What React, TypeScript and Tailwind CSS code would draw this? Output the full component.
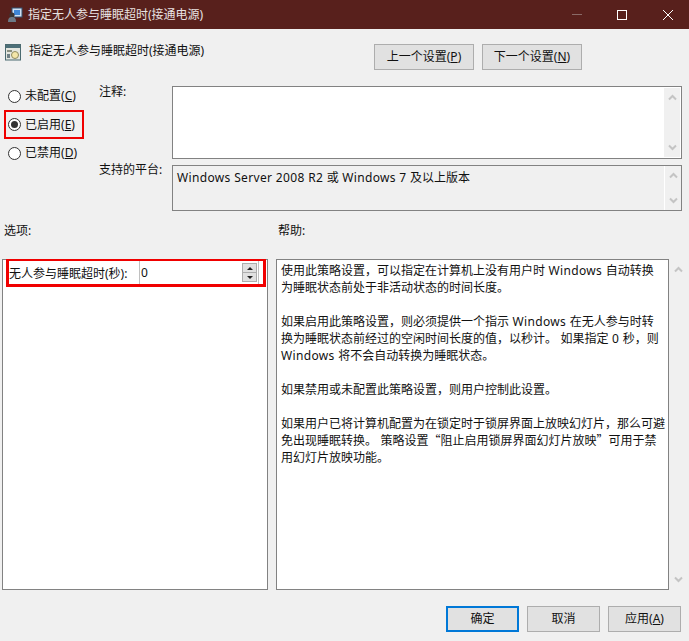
const font = { fontFamily: '"Noto Sans", "Noto Sans CJK SC", sans-serif' };
const cjk = { fontFamily: '"Noto Sans CJK SC", sans-serif' };

const helpParagraphs = [
  ["使用此策略设置，可以指定在计算机上没有用户时 Windows 自动转换", "为睡眠状态前处于非活动状态的时间长度。"],
  [
    "如果启用此策略设置，则必须提供一个指示 Windows 在无人参与时转",
    "换为睡眠状态前经过的空闲时间长度的值，以秒计。 如果指定 0 秒，则",
    "Windows 将不会自动转换为睡眠状态。",
  ],
  ["如果禁用或未配置此策略设置，则用户控制此设置。"],
  [
    "如果用户已将计算机配置为在锁定时于锁屏界面上放映幻灯片，那么可避",
    "免出现睡眠转换。 策略设置“阻止启用锁屏界面幻灯片放映”可用于禁",
    "用幻灯片放映功能。",
  ],
];

// latin runs sit a bit wider than the CJK ones, quotes come from the CJK font
const Mixed = ({ text }: { text: string }) => (
  <>
    {text.split(/([A-Za-z0-9 ]+|[“”])/).map((part, i) =>
      /^[A-Za-z0-9 ]+$/.test(part) ? (
        <span key={i} className="tracking-[0.35px]">
          {part}
        </span>
      ) : (
        <span key={i} style={cjk}>
          {part}
        </span>
      ),
    )}
  </>
);

const Chevron = ({ down }: { down?: boolean }) => (
  <svg width="9" height="7" viewBox="0 0 9 7" fill="none" stroke="#c4c4c4" strokeWidth="2">
    <path d={down ? "M1 1.5l3.5 3.5L8 1.5" : "M1 5.5L4.5 2 8 5.5"} />
  </svg>
);

const ScrollStrip = ({ className }: { className: string }) => (
  <div className={`flex flex-col items-center justify-between bg-[#f0f0f0] ${className}`}>
    <Chevron />
    <Chevron down />
  </div>
);

const Radio = ({ checked, label, hot }: { checked?: boolean; label: string; hot: string }) => (
  <div className="flex items-center gap-[4px]">
    <span className="flex h-[13px] w-[13px] items-center justify-center rounded-full border border-[#333] bg-white">
      {checked && <span className="h-[7px] w-[7px] rounded-full bg-[#333]" />}
    </span>
    <span className="text-[12px] leading-[16px]">
      {label}(<u>{hot}</u>)
    </span>
  </div>
);

const Btn = ({ children, primary }: { children: React.ReactNode; primary?: boolean }) => (
  <div
    className={`flex h-[26px] w-[73px] items-center justify-center bg-[#e1e1e1] text-[12px] ${
      primary ? "border-2 border-[#0078d7]" : "border border-[#adadad]"
    }`}
  >
    {children}
  </div>
);

export default function App() {
  return (
    <div style={font} className="flex h-[641px] w-[689px] flex-col overflow-hidden bg-[#f0f0f0] text-[12px] text-[#111]">
      {/* title bar */}
      <div className="flex h-[29px] shrink-0 items-center bg-[#58201c] pl-[7px] text-[#e8e2e1]">
        <svg width="16" height="16" viewBox="0 0 16 16">
          <rect x="5" y="1" width="10" height="9" fill="#cfe0f2" stroke="#33506e" />
          <rect x="7" y="3" width="6" height="5" fill="#3f86d6" />
          <circle cx="5" cy="8" r="2.6" fill="#3b3533" />
          <path d="M1 15c0-4 1.500-5 4-5s4 1 4 5z" fill="#6d7a86" />
        </svg>
        <span className="ml-[5px]">指定无人参与睡眠超时(接通电源)</span>
        <div className="ml-auto flex items-center">
          <span className="mr-[35px] h-px w-[10px] bg-[#8a6a67]" />
          <span className="mr-[36px] h-[10px] w-[10px] border border-white" />
          <svg width="10" height="10" viewBox="0 0 10 10" stroke="#fff" className="mr-[16px]">
            <path d="M0 0l10 10M10 0L0 10" />
          </svg>
        </div>
      </div>

      {/* heading row */}
      <div className="flex h-[57px] shrink-0 pt-[15px]">
        <svg width="16" height="17" viewBox="0 0 16 17" className="ml-[5px]">
          <rect x=".5" y=".5" width="15" height="15.500" fill="#e4e6df" stroke="#4b6a70" />
          <rect x="1" y="1" width="14" height="3" fill="#4d6f78" />
          <rect x="2" y="6" width="5" height="2" fill="#8a8f80" />
          <circle cx="10" cy="11" r="3.500" fill="#f3e5a8" stroke="#8f8a60" />
          <rect x="2" y="10" width="3" height="4" fill="#6f7f84" />
        </svg>
        <span className="ml-[8px] mt-[-1px] leading-[16px]">指定无人参与睡眠超时(接通电源)</span>
        <div className="ml-auto mr-[107px] flex gap-2">
          <div className="flex h-[26px] w-[100px] items-center justify-center border border-[#adadad] bg-[#e1e1e1]">
            上一个设置(<u>P</u>)
          </div>
          <div className="flex h-[26px] w-[100px] items-center justify-center border border-[#adadad] bg-[#e1e1e1]">
            下一个设置(<u>N</u>)
          </div>
        </div>
      </div>

      {/* state + comment */}
      <div className="flex h-[131px] shrink-0">
        <div className="flex w-[99px] shrink-0 flex-col pl-[8px] pt-[2px]">
          <Radio label="未配置" hot="C" />
          <div className="ml-[-4px] mt-[6px] flex h-[29px] w-[80px] items-center border-2 border-[#f00000] pl-[2px]">
            <Radio checked label="已启用" hot="E" />
          </div>
          <div className="mt-[6px]">
            <Radio label="已禁用" hot="D" />
          </div>
        </div>
        <div className="flex w-[73px] shrink-0 flex-col leading-[16px]">
          <span className="mt-[-2px]">注释:</span>
          <span className="mt-[62px]">支持的平台:</span>
        </div>
        <div className="flex w-[510px] flex-col gap-[6px]">
          <div className="flex h-[73px] justify-end border border-[#828282] bg-white p-px">
            <ScrollStrip className="w-[16px] py-[6px]" />
          </div>
          <div className="flex h-[46px] justify-between border border-[#828282] bg-[#f0f0f0] pl-[4px] leading-[16px]">
            <span className="pt-[3px] text-[12px]">
              <Mixed text="Windows Server 2008 R2 或 Windows 7 及以上版本" />
            </span>
            <ScrollStrip className="w-[17px] border-l border-white py-[6px]" />
          </div>
        </div>
      </div>

      {/* section labels */}
      <div className="flex h-[42px] shrink-0 pt-[6px] leading-[16px]">
        <span className="ml-[4px] w-[274px]">选项:</span>
        <span>帮助:</span>
      </div>

      {/* options + help */}
      <div className="flex h-[331px] shrink-0">
        <div className="ml-[2px] h-full w-[266px] border border-[#828282] bg-white px-[3px]">
          <div className="mt-[-1px] flex h-[28px] w-[260px] border-[3px] border-t-2 border-[#f00000]">
            <span className="w-[130px] pt-[5px] leading-[16px]">无人参与睡眠超时(秒):</span>
            <div className="mr-[4px] flex flex-1 items-center justify-between border-x border-[#c0c0c0] pl-[1px] pr-[1px]">
              <span className="mt-[1px] text-[12px]">0</span>
              <div className="flex h-[19px] w-[15px] flex-col border border-[#adadad] bg-[#e1e1e1]">
                <span className="flex flex-1 items-center justify-center border-b border-[#adadad]">
                  <span className="border-x-[3px] border-b-[3px] border-x-transparent border-b-[#222]" />
                </span>
                <span className="flex flex-1 items-center justify-center">
                  <span className="border-x-[3px] border-t-[3px] border-x-transparent border-t-[#222]" />
                </span>
              </div>
            </div>
          </div>
        </div>
        <div className="ml-[8px] h-full w-[393px] border border-[#828282] bg-white pl-[4px] pt-[1px] leading-[17px]">
          {helpParagraphs.map((lines) => (
            <p key={lines[0]} className="mb-[17px] whitespace-nowrap">
              {lines.map((line) => (
                <span key={line} className="block h-[17px]">
                  <Mixed text={line} />
                </span>
              ))}
            </p>
          ))}
        </div>
        <ScrollStrip className="ml-[1px] w-[16px] py-[7px]" />
      </div>

      {/* footer */}
      <div className="flex justify-end gap-2 pr-[8px] pt-[16px]">
        <Btn primary>确定</Btn>
        <Btn>取消</Btn>
        <Btn>
          <span>
            应用(<u>A</u>)
          </span>
        </Btn>
      </div>
    </div>
  );
}
